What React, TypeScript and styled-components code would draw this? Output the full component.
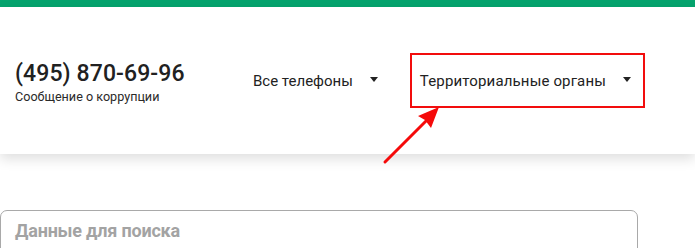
import React from "react";
import styled, { createGlobalStyle } from "styled-components";

const Global = createGlobalStyle`
  html, body { margin: 0; padding: 0; background: #fff; overflow: hidden; }
  body { font-family: Roboto, "Noto Sans", Arial, sans-serif; color: #222; }
`;

const Page = styled.div`
  position: relative;
  width: 695px;
  height: 248px;
  overflow: hidden;
`;

const TopBar = styled.div`
  height: 7px;
  background: #05a46e;
`;

const Header = styled.header`
  position: relative;
  height: 147px;
  display: flex;
  align-items: center;
  padding-left: 15px;
  background: #fff;
  box-shadow: 0 5px 12px rgba(0, 0, 0, 0.13);
  z-index: 1;
`;

const Contact = styled.div`
  display: flex;
  flex-direction: column;
  width: 236px;
  margin-top: 4px;
`;

const Phone = styled.div`
  font-size: 23px;
  font-weight: 500;
  line-height: 26px;
  color: #212121;
  letter-spacing: 0.1px;
`;

const Caption = styled.div`
  font-size: 12.6px;
  line-height: 14px;
  margin-top: 3px;
  color: #2a2a2a;
`;

const Dropdown = styled.div<{ $highlight?: boolean }>`
  display: flex;
  align-items: center;
  box-sizing: border-box;
  height: 55px;
  font-size: 15px;
  color: #222;
  ${(p) =>
    p.$highlight
      ? `border: 2px solid #f20d0d; padding: 0 12px 0 8px;`
      : `border: 2px solid transparent; padding: 0 30px 0 0;`}
`;

const Label = styled.span<{ $wide?: boolean; $gap: number }>`
  margin-right: ${(p) => p.$gap}px;
  letter-spacing: ${(p) => (p.$wide ? "0.15px" : "0")};
`;

const Caret = styled.span`
  width: 0;
  height: 0;
  border-left: 4px solid transparent;
  border-right: 4px solid transparent;
  border-top: 5px solid #222;
  margin-top: -2px;
`;

const Content = styled.main`
  padding-top: 56px;
`;

const SearchField = styled.div`
  box-sizing: border-box;
  width: 638px;
  height: 60px;
  border: 1px solid #a9a9a9;
  border-radius: 7px;
  padding: 9px 14px;
`;

const Placeholder = styled.span`
  font-size: 18px;
  font-weight: 700;
  color: #a3a3a3;
  letter-spacing: -0.2px;
`;

const Annotation = styled.svg`
  position: absolute;
  left: 0;
  top: 0;
  z-index: 2;
  pointer-events: none;
`;

export default function App() {
  return (
    <Page>
      <Global />
      <TopBar />
      <Header>
        <Contact>
          <Phone>(495) 870-69-96</Phone>
          <Caption>Сообщение о коррупции</Caption>
        </Contact>
        <Dropdown>
          <Label $gap={17}>Все телефоны</Label>
          <Caret />
        </Dropdown>
        <Dropdown $highlight>
          <Label $wide $gap={17}>Территориальные органы</Label>
          <Caret />
        </Dropdown>
      </Header>
      <Content>
        <SearchField>
          <Placeholder>Данные для поиска</Placeholder>
        </SearchField>
      </Content>
      <Annotation width="695" height="248" viewBox="0 0 695 248">
        <line x1="385" y1="162" x2="428" y2="119" stroke="#f50a0a" strokeWidth="3" strokeLinecap="round" />
        <polygon points="439,107 418,116 425,120 431,128" fill="#f50a0a" />
      </Annotation>
    </Page>
  );
}
